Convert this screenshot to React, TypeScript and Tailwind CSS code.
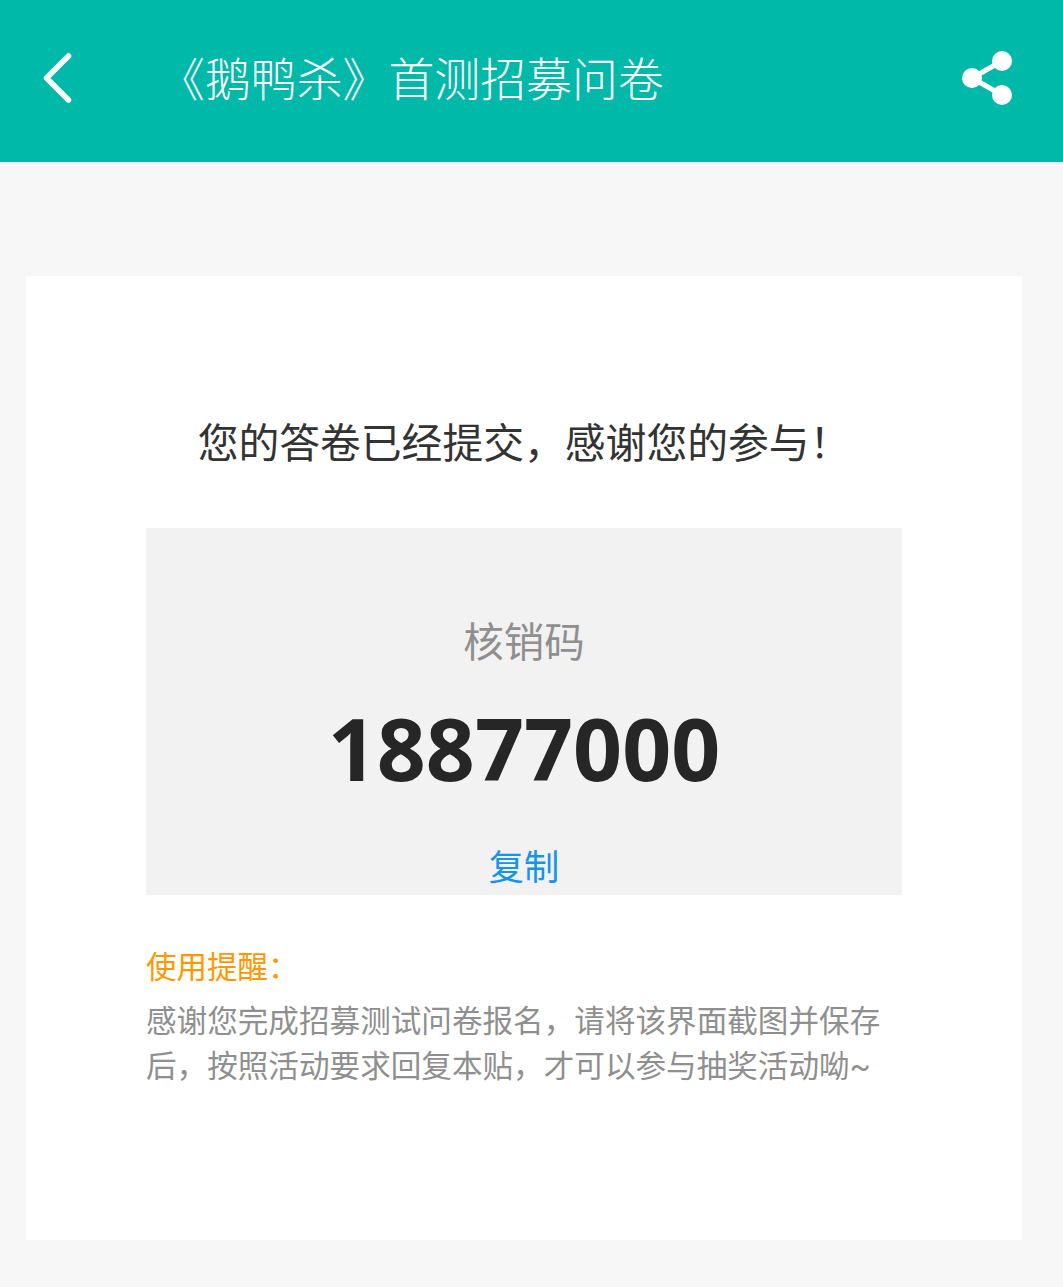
const cjk = "font-['Roboto','Noto_Sans_CJK_SC',sans-serif]";

function BackIcon() {
  return (
    <svg width="30" height="50" viewBox="0 0 30 50" fill="none">
      <path d="M26.5 3 L4.5 25 L26.5 47" stroke="#fff" strokeWidth="5.5" strokeLinecap="round" strokeLinejoin="round" />
    </svg>
  );
}

function ShareIcon() {
  return (
    <svg width="50" height="54" viewBox="0 0 50 54" fill="#fff">
      <circle cx="40" cy="10" r="10" />
      <circle cx="10" cy="27" r="10" />
      <circle cx="40" cy="44" r="10" />
      <path d="M40 10 L10 27 L40 44" fill="none" stroke="#fff" strokeWidth="5" />
    </svg>
  );
}

export default function App() {
  return (
    <div className={`${cjk} min-h-[1287px] bg-[#f7f7f7]`}>
      <header className="flex h-[162px] items-center bg-[#00b9a9] pb-[6px] pl-[42px] pr-[51px] text-white">
        <BackIcon />
        <h1 className="mt-[6px] ml-[87px] flex-1 text-[45.9px] leading-none font-light whitespace-nowrap">《鹅鸭杀》首测招募问卷</h1>
        <ShareIcon />
      </header>

      <main className="mx-[26px] mt-[114px] h-[964px] w-[996px] bg-white px-[120px] pt-[140px]">
        <p className="text-center text-[40.8px] leading-[56px] text-[#333] whitespace-nowrap">您的答卷已经提交，感谢您的参与！</p>

        <section className="mt-[56px] flex h-[367px] flex-col items-center overflow-hidden bg-[#f2f2f2] pt-[86px]">
          <div className="text-[40.5px] leading-[58px] text-[#8f8f8f]">核销码</div>
          <div className="mt-[21px] font-['Noto_Sans',sans-serif] text-[85.8px] leading-[110px] font-bold text-[#262626]">18877000</div>
          <div className="mt-[40px] text-[35.2px] leading-[50px] text-[#1493ef]">复制</div>
        </section>

        <div className="mt-[50px] text-[30.5px] leading-[46px] text-[#ff9800]">使用提醒：</div>
        <p className="mt-[8px] text-[30.6px] leading-[45px] text-[#8f8f8f]">
          感谢您完成招募测试问卷报名，请将该界面截图并保存后，按照活动要求回复本贴，才可以参与抽奖活动呦~
        </p>
      </main>
    </div>
  );
}
